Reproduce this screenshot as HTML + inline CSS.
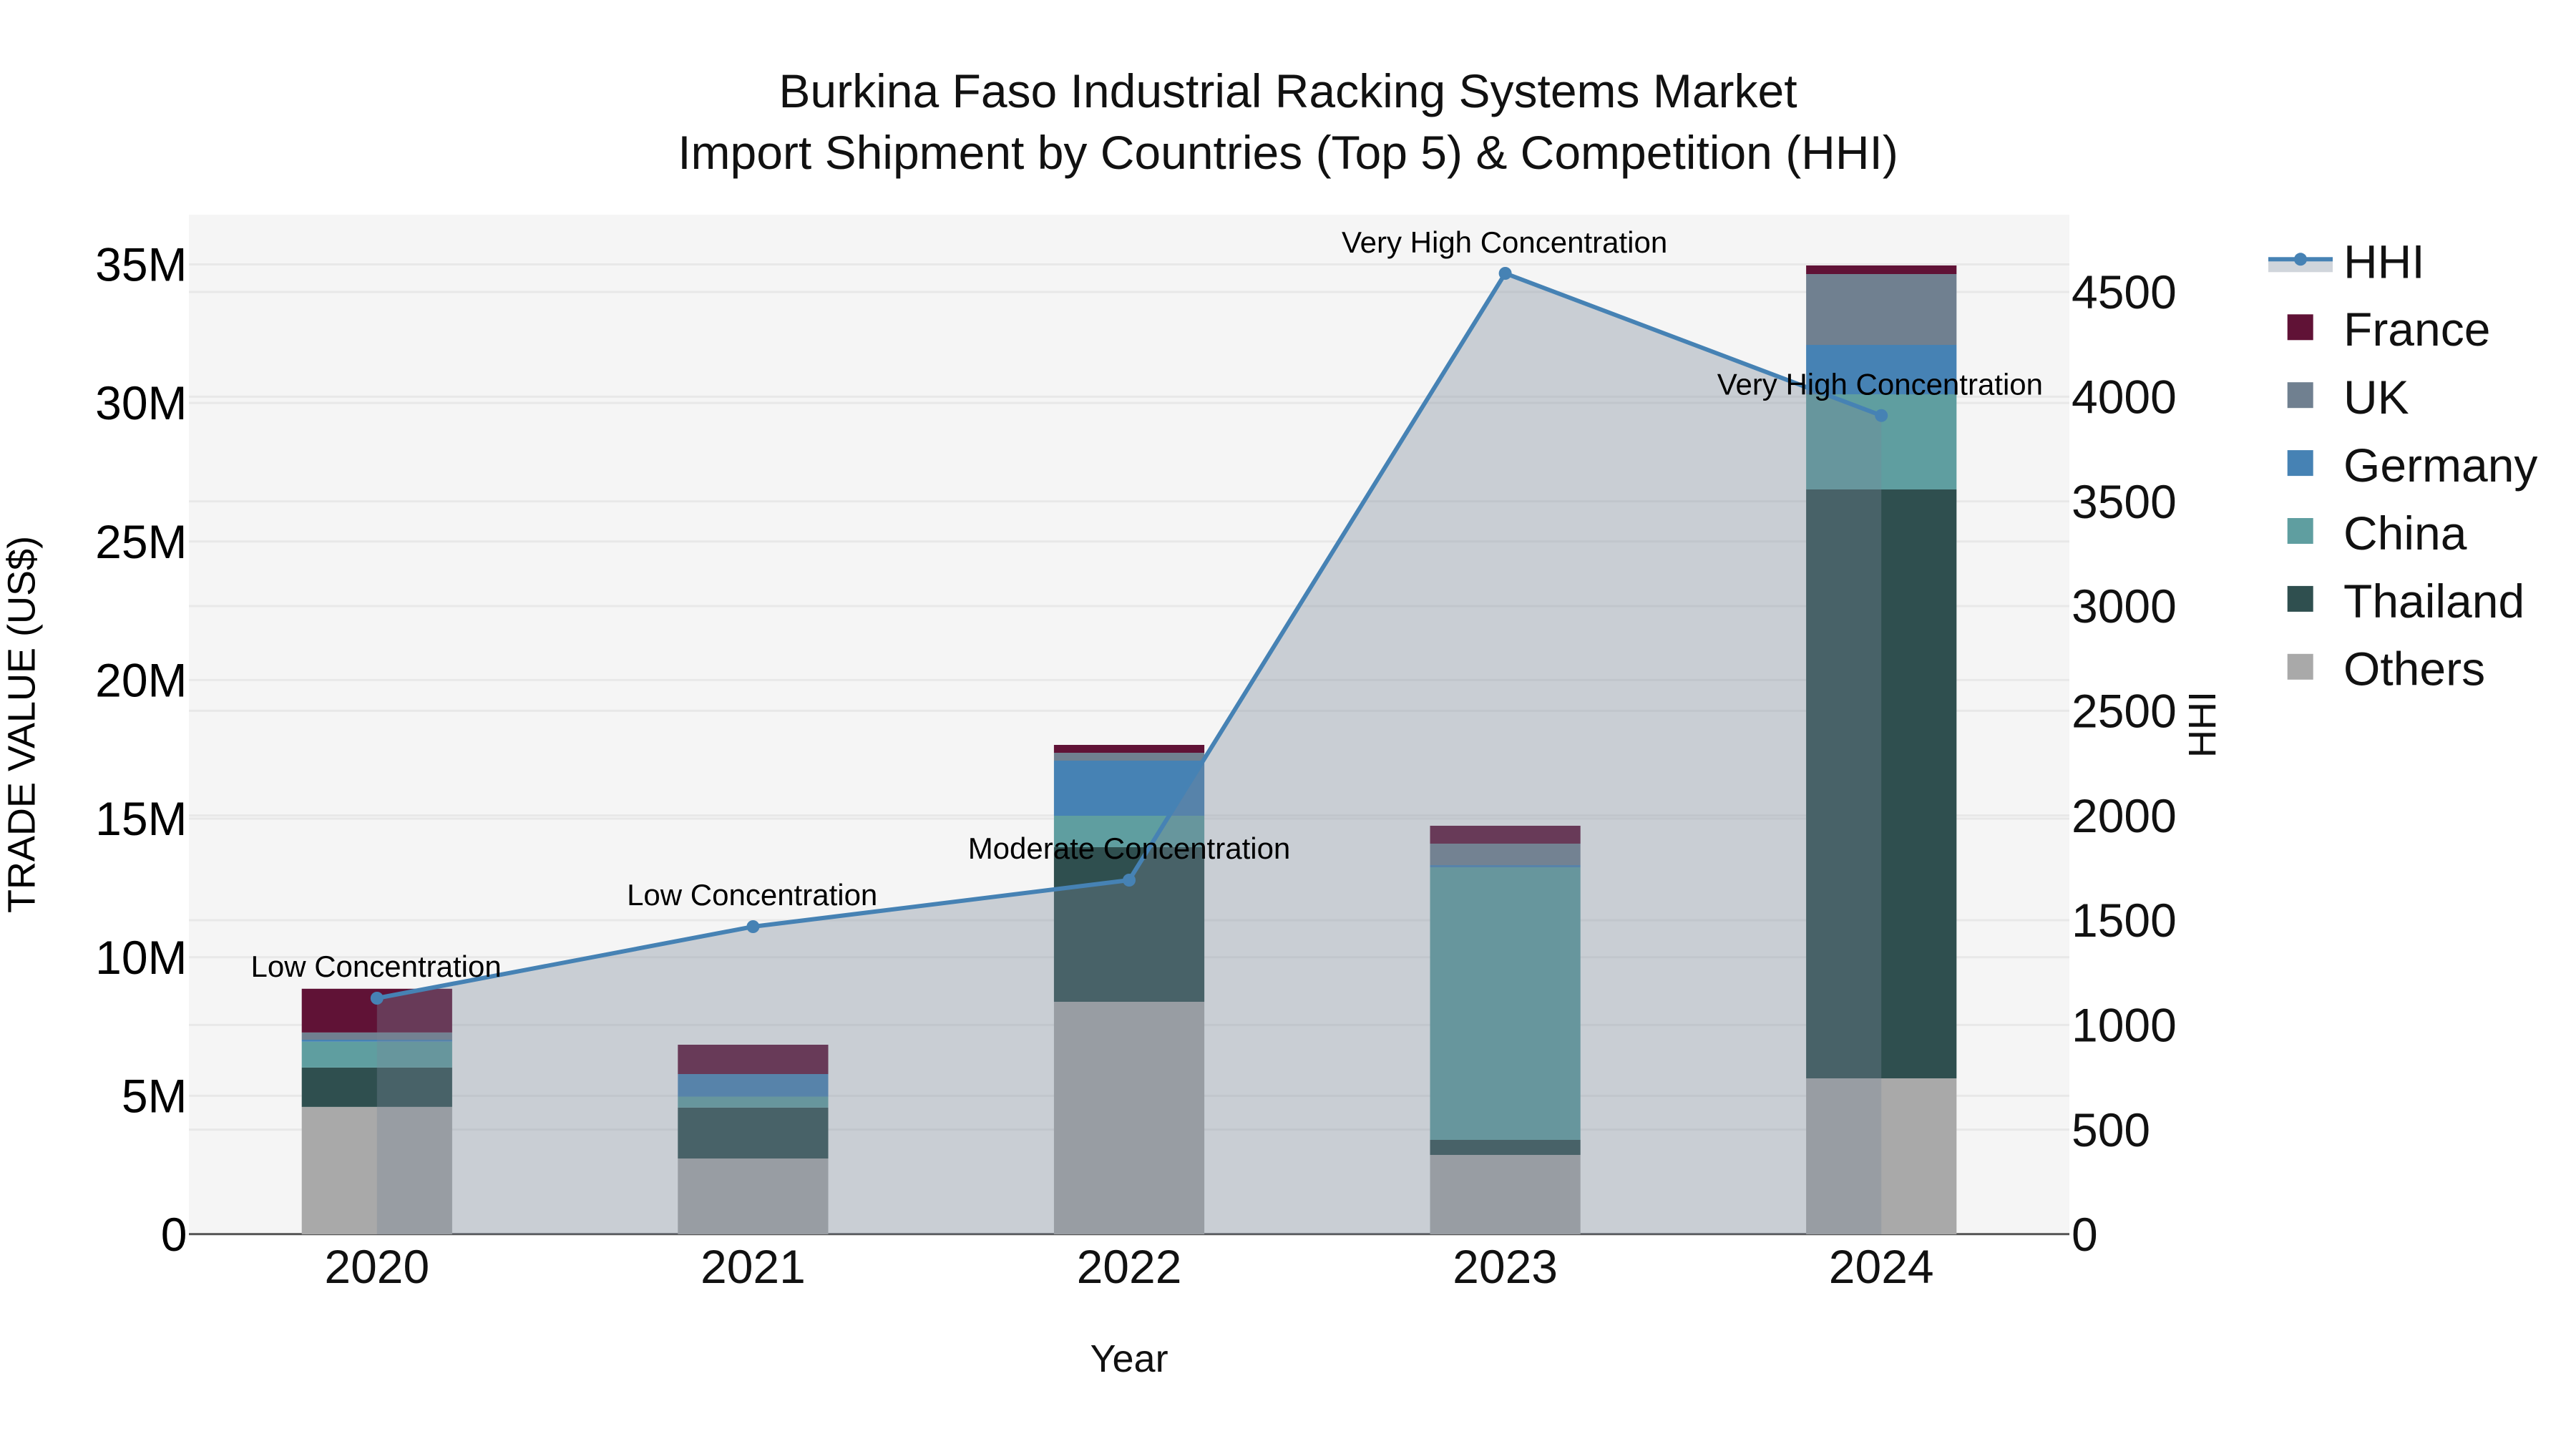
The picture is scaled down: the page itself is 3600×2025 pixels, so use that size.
<!DOCTYPE html>
<html>
<head>
<meta charset="utf-8">
<style>
html,body{margin:0;padding:0;background:#fff;width:3600px;height:2025px;overflow:hidden}
svg{display:block}
text{font-family:"Liberation Sans",sans-serif;fill:#111}
</style>
</head>
<body>
<svg width="3600" height="2025" viewBox="0 0 3600 2025" xmlns="http://www.w3.org/2000/svg">
<rect width="3600" height="2025" fill="#fff"/>
<rect x="264" y="300" width="2628" height="1425" fill="#f5f5f5"/>
<g stroke="#e8e8e8" stroke-width="3">
<path d="M264 1531.35H2892M264 1337.7H2892M264 1144.05H2892M264 950.4H2892M264 756.75H2892M264 563.1H2892M264 369.45H2892"/>
<path d="M264 1578.67H2892M264 1432.33H2892M264 1286H2892M264 1139.67H2892M264 993.33H2892M264 847H2892M264 700.67H2892M264 554.33H2892M264 408H2892"/>
</g>
<rect x="264" y="1723.2" width="2628" height="3" fill="#555"/>

<!-- 2020 -->
<g>
<rect x="421.7" y="1546.9" width="210.2" height="178.1" fill="#a9a9a9"/>
<rect x="421.7" y="1491.9" width="210.2" height="55" fill="#2f4f4f"/>
<rect x="421.7" y="1455.8" width="210.2" height="36.1" fill="#5f9ea0"/>
<rect x="421.7" y="1453" width="210.2" height="2.8" fill="#4682b4"/>
<rect x="421.7" y="1442.9" width="210.2" height="10.1" fill="#708090"/>
<rect x="421.7" y="1381.8" width="210.2" height="61.1" fill="#601236"/>
</g>
<!-- 2021 -->
<g>
<rect x="947.3" y="1619" width="210.2" height="106" fill="#a9a9a9"/>
<rect x="947.3" y="1547.8" width="210.2" height="71.2" fill="#2f4f4f"/>
<rect x="947.3" y="1532.5" width="210.2" height="15.3" fill="#5f9ea0"/>
<rect x="947.3" y="1501" width="210.2" height="31.5" fill="#4682b4"/>
<rect x="947.3" y="1460" width="210.2" height="41" fill="#601236"/>
</g>
<!-- 2022 -->
<g>
<rect x="1472.9" y="1400" width="210.2" height="325" fill="#a9a9a9"/>
<rect x="1472.9" y="1184" width="210.2" height="216" fill="#2f4f4f"/>
<rect x="1472.9" y="1140" width="210.2" height="44" fill="#5f9ea0"/>
<rect x="1472.9" y="1063" width="210.2" height="77" fill="#4682b4"/>
<rect x="1472.9" y="1052" width="210.2" height="11" fill="#708090"/>
<rect x="1472.9" y="1041" width="210.2" height="11" fill="#601236"/>
</g>
<!-- 2023 -->
<g>
<rect x="1998.5" y="1614" width="210.2" height="111" fill="#a9a9a9"/>
<rect x="1998.5" y="1593" width="210.2" height="21" fill="#2f4f4f"/>
<rect x="1998.5" y="1212" width="210.2" height="381" fill="#5f9ea0"/>
<rect x="1998.5" y="1209" width="210.2" height="3" fill="#4682b4"/>
<rect x="1998.5" y="1179" width="210.2" height="30" fill="#708090"/>
<rect x="1998.5" y="1154" width="210.2" height="25" fill="#601236"/>
</g>
<!-- 2024 -->
<g>
<rect x="2524.1" y="1507" width="210.2" height="218" fill="#a9a9a9"/>
<rect x="2524.1" y="684" width="210.2" height="823" fill="#2f4f4f"/>
<rect x="2524.1" y="551" width="210.2" height="133" fill="#5f9ea0"/>
<rect x="2524.1" y="482" width="210.2" height="69" fill="#4682b4"/>
<rect x="2524.1" y="383" width="210.2" height="99" fill="#708090"/>
<rect x="2524.1" y="371" width="210.2" height="12" fill="#601236"/>
</g>

<!-- HHI -->
<path d="M526.8 1395L1052.4 1295L1578 1230L2103.6 382L2629.2 580.7V1725H526.8Z" fill="rgba(119,136,153,0.35)"/>
<path d="M526.8 1395L1052.4 1295L1578 1230L2103.6 382L2629.2 580.7" fill="none" stroke="#4682b4" stroke-width="6" stroke-linejoin="round"/>
<g fill="#4682b4">
<circle cx="526.8" cy="1395" r="9"/>
<circle cx="1052.4" cy="1295" r="9"/>
<circle cx="1578" cy="1230" r="9"/>
<circle cx="2103.6" cy="382" r="9"/>
<circle cx="2629.2" cy="580.7" r="9"/>
</g>

<!-- Annotations -->
<g font-size="42" text-anchor="middle" style="fill:#000">
<text x="525.6" y="1365" style="fill:#000">Low Concentration</text>
<text x="1051.2" y="1265" style="fill:#000">Low Concentration</text>
<text x="1578" y="1200" style="fill:#000">Moderate Concentration</text>
<text x="2102.6" y="353" style="fill:#000">Very High Concentration</text>
<text x="2627.4" y="551.5" style="fill:#000">Very High Concentration</text>
</g>

<!-- Title -->
<g font-size="66" text-anchor="middle">
<text x="1800" y="150">Burkina Faso Industrial Racking Systems Market</text>
<text x="1800" y="235.8">Import Shipment by Countries (Top 5) &amp; Competition (HHI)</text>
</g>

<!-- Left ticks -->
<g font-size="66" text-anchor="end">
<text x="261.5" y="392.55" style="fill:#000">35M</text>
<text x="261.5" y="586.2" style="fill:#000">30M</text>
<text x="261.5" y="779.85" style="fill:#000">25M</text>
<text x="261.5" y="973.5" style="fill:#000">20M</text>
<text x="261.5" y="1167.15" style="fill:#000">15M</text>
<text x="261.5" y="1360.8" style="fill:#000">10M</text>
<text x="261.5" y="1554.45" style="fill:#000">5M</text>
<text x="261.5" y="1748.1" style="fill:#000">0</text>
</g>

<!-- Right ticks -->
<g font-size="66">
<text x="2895" y="431.1">4500</text>
<text x="2895" y="577.43">4000</text>
<text x="2895" y="723.77">3500</text>
<text x="2895" y="870.1">3000</text>
<text x="2895" y="1016.43">2500</text>
<text x="2895" y="1162.77">2000</text>
<text x="2895" y="1309.1">1500</text>
<text x="2895" y="1455.43">1000</text>
<text x="2895" y="1601.77">500</text>
<text x="2895" y="1748.1">0</text>
</g>

<!-- X ticks -->
<g font-size="66" text-anchor="middle">
<text x="526.8" y="1793">2020</text>
<text x="1052.4" y="1793">2021</text>
<text x="1578" y="1793">2022</text>
<text x="2103.6" y="1793">2023</text>
<text x="2629.2" y="1793">2024</text>
</g>

<!-- Axis titles -->
<text x="1578" y="1917" font-size="54" text-anchor="middle">Year</text>
<text transform="translate(48.7,1012.5) rotate(-90)" font-size="54" text-anchor="middle" style="fill:#000">TRADE VALUE (US$)</text>
<text transform="translate(3096,1012.5) rotate(-90)" font-size="54" text-anchor="middle">HHI</text>

<!-- Legend -->
<rect x="3170" y="362.3" width="90" height="18" fill="rgba(119,136,153,0.35)"/>
<rect x="3170" y="359.3" width="90" height="6" fill="#4682b4"/>
<circle cx="3215" cy="362.3" r="9" fill="#4682b4"/>
<rect x="3196.7" y="439.3" width="36" height="36" fill="#601236"/>
<rect x="3196.7" y="534.2" width="36" height="36" fill="#708090"/>
<rect x="3196.7" y="629.1" width="36" height="36" fill="#4682b4"/>
<rect x="3196.7" y="724" width="36" height="36" fill="#5f9ea0"/>
<rect x="3196.7" y="818.9" width="36" height="36" fill="#2f4f4f"/>
<rect x="3196.7" y="913.8" width="36" height="36" fill="#a9a9a9"/>
<g font-size="66">
<text x="3275" y="388.3">HHI</text>
<text x="3275" y="483.2">France</text>
<text x="3275" y="578.1">UK</text>
<text x="3275" y="673">Germany</text>
<text x="3275" y="767.9">China</text>
<text x="3275" y="862.8">Thailand</text>
<text x="3275" y="957.7">Others</text>
</g>
</svg>
</body>
</html>
